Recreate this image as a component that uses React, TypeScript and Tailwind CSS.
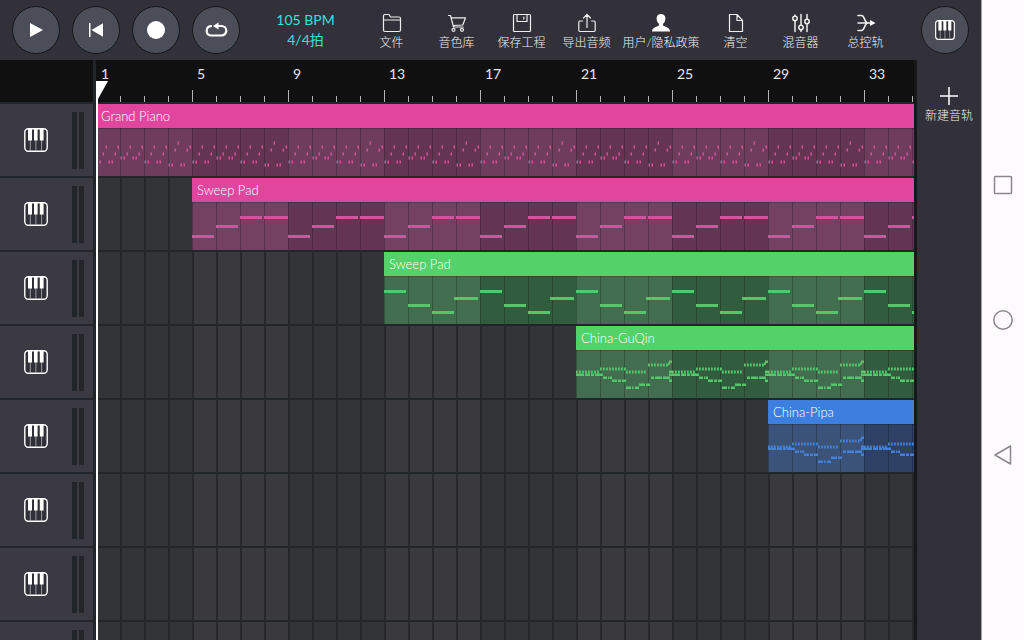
import { useLayoutEffect, useRef, useState } from "react";
import type { ReactNode } from "react";

type Note = { x: number; y: number; w: number; h: number };

type Clip = {
  name: string;
  startClass: string;
  header: string;
  light: string;
  dark: string;
  note: string;
  notes: Note[];
};

const BAR_WIDTH = 24;
const MAX_BARS = 80;
const SEGMENTS = Array.from({ length: 20 }, (_, i) => i);

// [low, mid, high, last] heights of the arpeggio in each bar
const ARPEGGIO = [
  [34, 26, 19, 19],
  [30, 26, 19, 19],
  [34, 26, 19, 19],
  [37, 22, 15, 19],
];

const pianoNotes: Note[] = ARPEGGIO.flatMap(([low, mid, high, last], bar) =>
  [low, low, mid, high, low, low, mid, last].map((y, i) => ({
    x: bar * BAR_WIDTH + i * 3 + 0.5,
    y: y - 1.5,
    w: 1.5,
    h: 3,
  }))
);

function dots(from: number, to: number, y: number): Note[] {
  const out: Note[] = [];
  for (let x = from; x < to; x += 3) out.push({ x, y: y - 1.5, w: 1.8, h: 3 });
  return out;
}

function dash(x: number, w: number, y: number): Note {
  return { x, y: y - 1.5, w, h: 2.5 };
}

function melody(l: number[]): Note[] {
  const [top, high, upper, mid, base, low1, low2, low3, low4] = l;
  return [
    ...dots(0, 24, mid),
    dash(0, 8, base),
    dash(9, 5, base),
    dash(15, 3, base),
    dash(19, 8, base),
    ...dots(24, 50, upper),
    ...dots(50, 71, mid),
    ...dots(72, 92, high),
    dash(27, 4, low1),
    dash(32, 1.5, low1),
    dash(34, 2, low1),
    dash(36, 5, low2),
    dash(42, 3, low2),
    dash(46, 4, low2),
    dash(50, 5, low4),
    dash(56, 1.5, low4),
    dash(59, 4, low4),
    dash(63, 6, low3),
    dash(70, 4, low3),
    dash(75, 3, low1),
    dash(79, 7, low1),
    dash(87, 7, low1),
    dash(93, 3, top),
    dash(92, 2, top + 2),
    dash(93, 3, mid),
    dash(93, 3, base),
    dash(93, 3, low2),
  ];
}

const padNotes: Note[] = [
  { x: 0, y: 33, w: 22, h: 3 },
  { x: 24, y: 23, w: 22, h: 3 },
  { x: 48, y: 14, w: 22, h: 3 },
  { x: 72, y: 14, w: 24, h: 3 },
];

const padNotes2: Note[] = [
  { x: 0, y: 14, w: 22, h: 3 },
  { x: 24, y: 28, w: 22, h: 3 },
  { x: 48, y: 35, w: 22, h: 3 },
  { x: 70, y: 21, w: 24, h: 3 },
];

const pink = {
  header: "bg-[#e0469d]",
  light: "bg-[#744163]",
  dark: "bg-[#643453]",
  note: "#d4529a",
};

const green = {
  header: "bg-[#54d168]",
  light: "bg-[#436d4f]",
  dark: "bg-[#325c3e]",
  note: "#56c66c",
};

const blue = {
  header: "bg-[#3c7fde]",
  light: "bg-[#3c5379]",
  dark: "bg-[#2e4165]",
  note: "#4380d6",
};

const TRACKS: (Clip | null)[] = [
  { ...pink, light: "bg-[#6e3c5c]", name: "Grand Piano", startClass: "col-start-1", notes: pianoNotes },
  { ...pink, name: "Sweep Pad", startClass: "col-start-5", notes: padNotes },
  { ...green, name: "Sweep Pad", startClass: "col-start-13", notes: padNotes2 },
  {
    ...green,
    name: "China-GuQin",
    startClass: "col-start-21",
    notes: melody([12, 15, 19, 22, 25, 28, 31, 35, 38]),
  },
  {
    ...blue,
    name: "China-Pipa",
    startClass: "col-start-29",
    notes: melody([14, 17, 20, 23, 25, 28, 31, 34, 38]),
  },
  null,
  null,
  null,
];

function PianoIcon({ size }: { size: number }) {
  return (
    <svg width={size} height={size} viewBox="0 0 24 24" fill="none">
      <rect x="0.8" y="0.8" width="22.4" height="22.4" rx="3.5" fill="#303038" stroke="#fff" strokeWidth="1.4" />
      <path d="M6.3 12v11M11.9 12v11M17.6 12v11" stroke="#b4b4b8" strokeWidth="0.8" />
      <path d="M4 1h4v11.5H4zM10 1h3.6v11.5H10zM15.8 1h3.8v11.5h-3.8z" fill="#fff" />
    </svg>
  );
}

function LineIcon({ children }: { children: ReactNode }) {
  return (
    <svg
      width="20"
      height="20"
      viewBox="0 0 20 20"
      fill="none"
      stroke="#eeeeee"
      strokeWidth="1.2"
      strokeLinecap="round"
      strokeLinejoin="round"
    >
      {children}
    </svg>
  );
}

function RoundButton({
  label,
  onClick,
  children,
}: {
  label: string;
  onClick?: () => void;
  children: ReactNode;
}) {
  return (
    <button
      aria-label={label}
      onClick={onClick}
      className="flex size-12 shrink-0 cursor-pointer items-center justify-center rounded-full border border-[#17181c] bg-[#4b4e59]"
    >
      {children}
    </button>
  );
}

const MENU: { label: string; wide?: boolean; icon: ReactNode }[] = [
  {
    label: "文件",
    icon: <path d="M1.5 7V3a1.5 1.5 0 0 1 1.5-1.5h4L8.500 4H17a1.5 1.5 0 0 1 1.5 1.5V17a1.5 1.5 0 0 1-1.5 1.5H3A1.5 1.5 0 0 1 1.5 17V7h17" />,
  },
  {
    label: "音色库",
    icon: (
      <>
        <path d="M1.500 2.500h2L6.500 14h9.500M4.200 4.800h14.300l-2.700 7.200-9.700.500" />
        <circle cx="6.5" cy="16.8" r="1.5" />
        <circle cx="15" cy="16.8" r="1.5" />
      </>
    ),
  },
  {
    label: "保存工程",
    icon: (
      <>
        <rect x="1.5" y="1.5" width="17" height="17" rx="1" />
        <path d="M5 1.5V8.500h10V1.5M11.800 4v2" />
      </>
    ),
  },
  {
    label: "导出音频",
    icon: <path d="M5.5 8H3a1.2 1.2 0 0 0-1.2 1.2v8A1.3 1.3 0 0 0 3 18.5h14a1.3 1.3 0 0 0 1.2-1.3v-8A1.2 1.2 0 0 0 17 8h-2.5M10 14.5V1.5M6.5 5 10 1.5 13.5 5" />,
  },
  {
    label: "用户/隐私政策",
    wide: true,
    icon: (
      <path
        d="M10 1C7.2 1 5.6 2.8 5.6 5.2c0 2.6 1 4.6 2.4 5.6v1.7c-1 1-6.900 1.600-7 6h18c-.1-4.400-6-5-7-6v-1.700c1.400-1 2.400-3 2.400-5.600C14.400 2.800 12.800 1 10 1z"
        fill="#fff"
        stroke="none"
      />
    ),
  },
  {
    label: "清空",
    icon: <path d="M3.500 1.500h7.500l5.500 6v11h-13zM11 1.500v6h5.500" />,
  },
  {
    label: "混音器",
    icon: (
      <g strokeWidth="1.500">
        <circle cx="4" cy="5.500" r="2.200" />
        <circle cx="10" cy="14.500" r="2.200" />
        <circle cx="16" cy="8.500" r="2.200" />
        <path d="M4 2v1M4 8v10.500M10 1.500v10.500M10 17v1.500M16 1.500V6M16 11v7.500" />
      </g>
    ),
  },
  {
    label: "总控轨",
    icon: (
      <>
        <path d="M2 2.500h3.500c3.500 0 2.500 7.500 6.500 7.500-4 0-3 7.500-6.500 7.500H2M2 10h13" strokeWidth="1.600" />
        <path d="M14 7 19.500 10 14 13z" fill="#fff" stroke="none" />
      </>
    ),
  },
];

function Toolbar() {
  const [recording, setRecording] = useState(false);

  return (
    <header className="flex h-[60px] shrink-0 items-center gap-3 bg-[#32313a] px-3">
      <RoundButton label="播放">
        <svg width="14" height="16" viewBox="0 0 14 16" fill="#fff">
          <path d="M1 1v14l13-7z" />
        </svg>
      </RoundButton>
      <RoundButton label="回到开头">
        <svg width="16" height="16" viewBox="0 0 16 16" fill="#fff">
          <path d="M1 1h1.500v14H1zM15 1.200v13.600L3.500 8z" />
        </svg>
      </RoundButton>
      <RoundButton label="录音" onClick={() => setRecording(!recording)}>
        <span className={recording ? "size-[18px] rounded-full bg-red-500" : "size-[18px] rounded-full bg-white"} />
      </RoundButton>
      <RoundButton label="循环">
        <svg width="24" height="16" viewBox="0 0 24 16" fill="none">
          <path
            d="M7 4.200A4.700 4.700 0 0 0 6.500 13.500h11A4.700 4.700 0 0 0 17.500 4H13"
            stroke="#fff"
            strokeWidth="2.200"
            strokeLinecap="round"
          />
          <path d="M9 4 14.500.500v7z" fill="#fff" />
        </svg>
      </RoundButton>

      <div className="flex items-center">
        <button className="w-[107px] cursor-pointer text-sm leading-5 text-[#35e0dc]">
          <span className="block">105 BPM</span>
          <span className="block">4/4拍</span>
        </button>
        <nav className="flex pt-1">
          {MENU.map((item) => (
            <button
              key={item.label}
              className={`${item.wide ? "w-[84px]" : "w-[65px]"} flex cursor-pointer flex-col items-center gap-0.5 text-xs font-light whitespace-nowrap text-[#f0f0f0]`}
            >
              <LineIcon>{item.icon}</LineIcon>
              {item.label}
            </button>
          ))}
        </nav>
      </div>

      <div className="ml-auto">
        <RoundButton label="键盘">
          <PianoIcon size={20} />
        </RoundButton>
      </div>
    </header>
  );
}

function Ruler({ bars }: { bars: number[] }) {
  return (
    <div className="relative h-[42px] shrink-0 bg-[#101010]">
      <div className="grid h-full grid-cols-[repeat(80,24px)] overflow-hidden">
        {bars.map((bar) => {
          const major = bar % 4 === 1;
          return (
            <div key={bar} className="flex h-full flex-col justify-between">
              <span className="h-7 pt-1 pl-[5px] text-sm text-[#e6e6e6]">{major ? bar : ""}</span>
              {bar > 1 && (
                <span className={major ? "h-3 w-px shrink-0 bg-[#b4b4b4]" : "h-1.5 w-px shrink-0 bg-[#b4b4b4]"} />
              )}
            </div>
          );
        })}
      </div>
      <svg className="absolute bottom-0 left-0" width="12" height="21" viewBox="0 0 12 21" fill="#fff">
        <path d="M0 0h12L2 18v3H0z" />
      </svg>
    </div>
  );
}

function TrackHeader({ index }: { index: number }) {
  return (
    <div className="flex h-[74px] shrink-0 items-center border-t-2 border-[#222529] bg-[#3b3a42] pl-6">
      <button aria-label={`音轨 ${index + 1}`} className="cursor-pointer">
        <PianoIcon size={24} />
      </button>
      <div className="ml-6 flex gap-0.5">
        <span className="h-[57px] w-[5px] bg-[#212529]" />
        <span className="h-[57px] w-[5px] bg-[#232529]" />
      </div>
    </div>
  );
}

function ClipView({ clip }: { clip: Clip }) {
  return (
    <div className={`${clip.startClass} col-end-[-1] row-start-1 overflow-hidden`}>
      <div className={`${clip.header} h-6 pl-[5px] text-[13px] leading-6 font-light text-white`}>{clip.name}</div>
      <div className="flex">
        {SEGMENTS.map((s) => (
          <svg
            key={s}
            width="96"
            height="48"
            viewBox="0 0 96 48"
            className={`${s % 2 === 0 ? clip.light : clip.dark} shrink-0`}
          >
            <path d="M0 0h96" stroke="#000" strokeOpacity="0.2" strokeWidth="2" />
            <path d="M.5 0v48M24.5 0v48M48.5 0v48M72.5 0v48" stroke="#000" strokeOpacity="0.22" />
            {clip.notes.map((n, i) => (
              <rect key={i} x={n.x} y={n.y} width={n.w} height={n.h} fill={clip.note} />
            ))}
          </svg>
        ))}
      </div>
    </div>
  );
}

function Lane({ clip, bars }: { clip: Clip | null; bars: number[] }) {
  return (
    <div className="grid h-[74px] shrink-0 grid-cols-[repeat(80,24px)] grid-rows-[72px] overflow-hidden border-t-2 border-[#222529]">
      {bars.map((bar) => (
        <div
          key={bar}
          style={{ gridColumnStart: bar }}
          className={`${Math.floor((bar - 1) / 4) % 2 === 0 ? "bg-[#323438]" : "bg-[#39393e]"} row-start-1 border-l-2 border-[#25272c]`}
        />
      ))}
      {clip && <ClipView clip={clip} />}
    </div>
  );
}

function Timeline() {
  const ref = useRef<HTMLElement>(null);
  const [count, setCount] = useState(0);

  useLayoutEffect(() => {
    const el = ref.current;
    if (!el) return;
    const update = () => setCount(Math.min(MAX_BARS, Math.ceil(el.clientWidth / BAR_WIDTH)));
    update();
    const observer = new ResizeObserver(update);
    observer.observe(el);
    return () => observer.disconnect();
  }, []);

  const bars = Array.from({ length: count }, (_, i) => i + 1);

  return (
    <main ref={ref} className="relative flex min-w-0 flex-1 flex-col overflow-hidden border-r-3 border-[#17181b]">
      <Ruler bars={bars} />
      {TRACKS.map((clip, i) => (
        <Lane key={i} clip={clip} bars={bars} />
      ))}
      <div className="absolute top-[42px] bottom-0 left-0 w-0.5 bg-white" />
    </main>
  );
}

function SystemBar() {
  return (
    <nav className="flex w-[43px] shrink-0 flex-col items-center justify-center gap-[115px] border-l border-[#a5a3a8] bg-[#fefbff]">
      <button aria-label="最近任务">
        <svg width="20" height="20" viewBox="0 0 20 20" fill="none" stroke="#8a888b" strokeWidth="1.5">
          <rect x="1.5" y="1.5" width="17" height="17" rx="0.8" />
        </svg>
      </button>
      <button aria-label="主页">
        <svg width="20" height="20" viewBox="0 0 20 20" fill="none" stroke="#8a888b" strokeWidth="1.5">
          <circle cx="10" cy="10" r="9.2" />
        </svg>
      </button>
      <button aria-label="返回">
        <svg width="20" height="20" viewBox="0 0 20 20" fill="none" stroke="#8a888b" strokeWidth="1.5" strokeLinejoin="round">
          <path d="M17.5 1v18L2 10z" />
        </svg>
      </button>
    </nav>
  );
}

export default function App() {
  return (
    <div className="flex h-screen overflow-hidden bg-[#32313a] font-['Lato','Noto_Sans_CJK_SC',sans-serif]">
      <div className="flex min-w-0 flex-1 flex-col">
        <Toolbar />
        <div className="flex min-h-0 flex-1">
          <div className="flex w-24 shrink-0 flex-col overflow-hidden border-r-3 border-[#22262a]">
            <div className="h-[42px] shrink-0 bg-[#101010]" />
            {TRACKS.map((_, i) => (
              <TrackHeader key={i} index={i} />
            ))}
          </div>

          <Timeline />

          <aside className="w-16 shrink-0 pt-[26px]">
            <button className="flex w-full cursor-pointer flex-col items-center gap-0.5 text-xs font-light whitespace-nowrap text-[#f0f0f0]">
              <svg width="20" height="20" viewBox="0 0 20 20" stroke="#fff" strokeWidth="1.5">
                <path d="M10 1v18M1 10h18" />
              </svg>
              新建音轨
            </button>
          </aside>
        </div>
      </div>
      <SystemBar />
    </div>
  );
}
